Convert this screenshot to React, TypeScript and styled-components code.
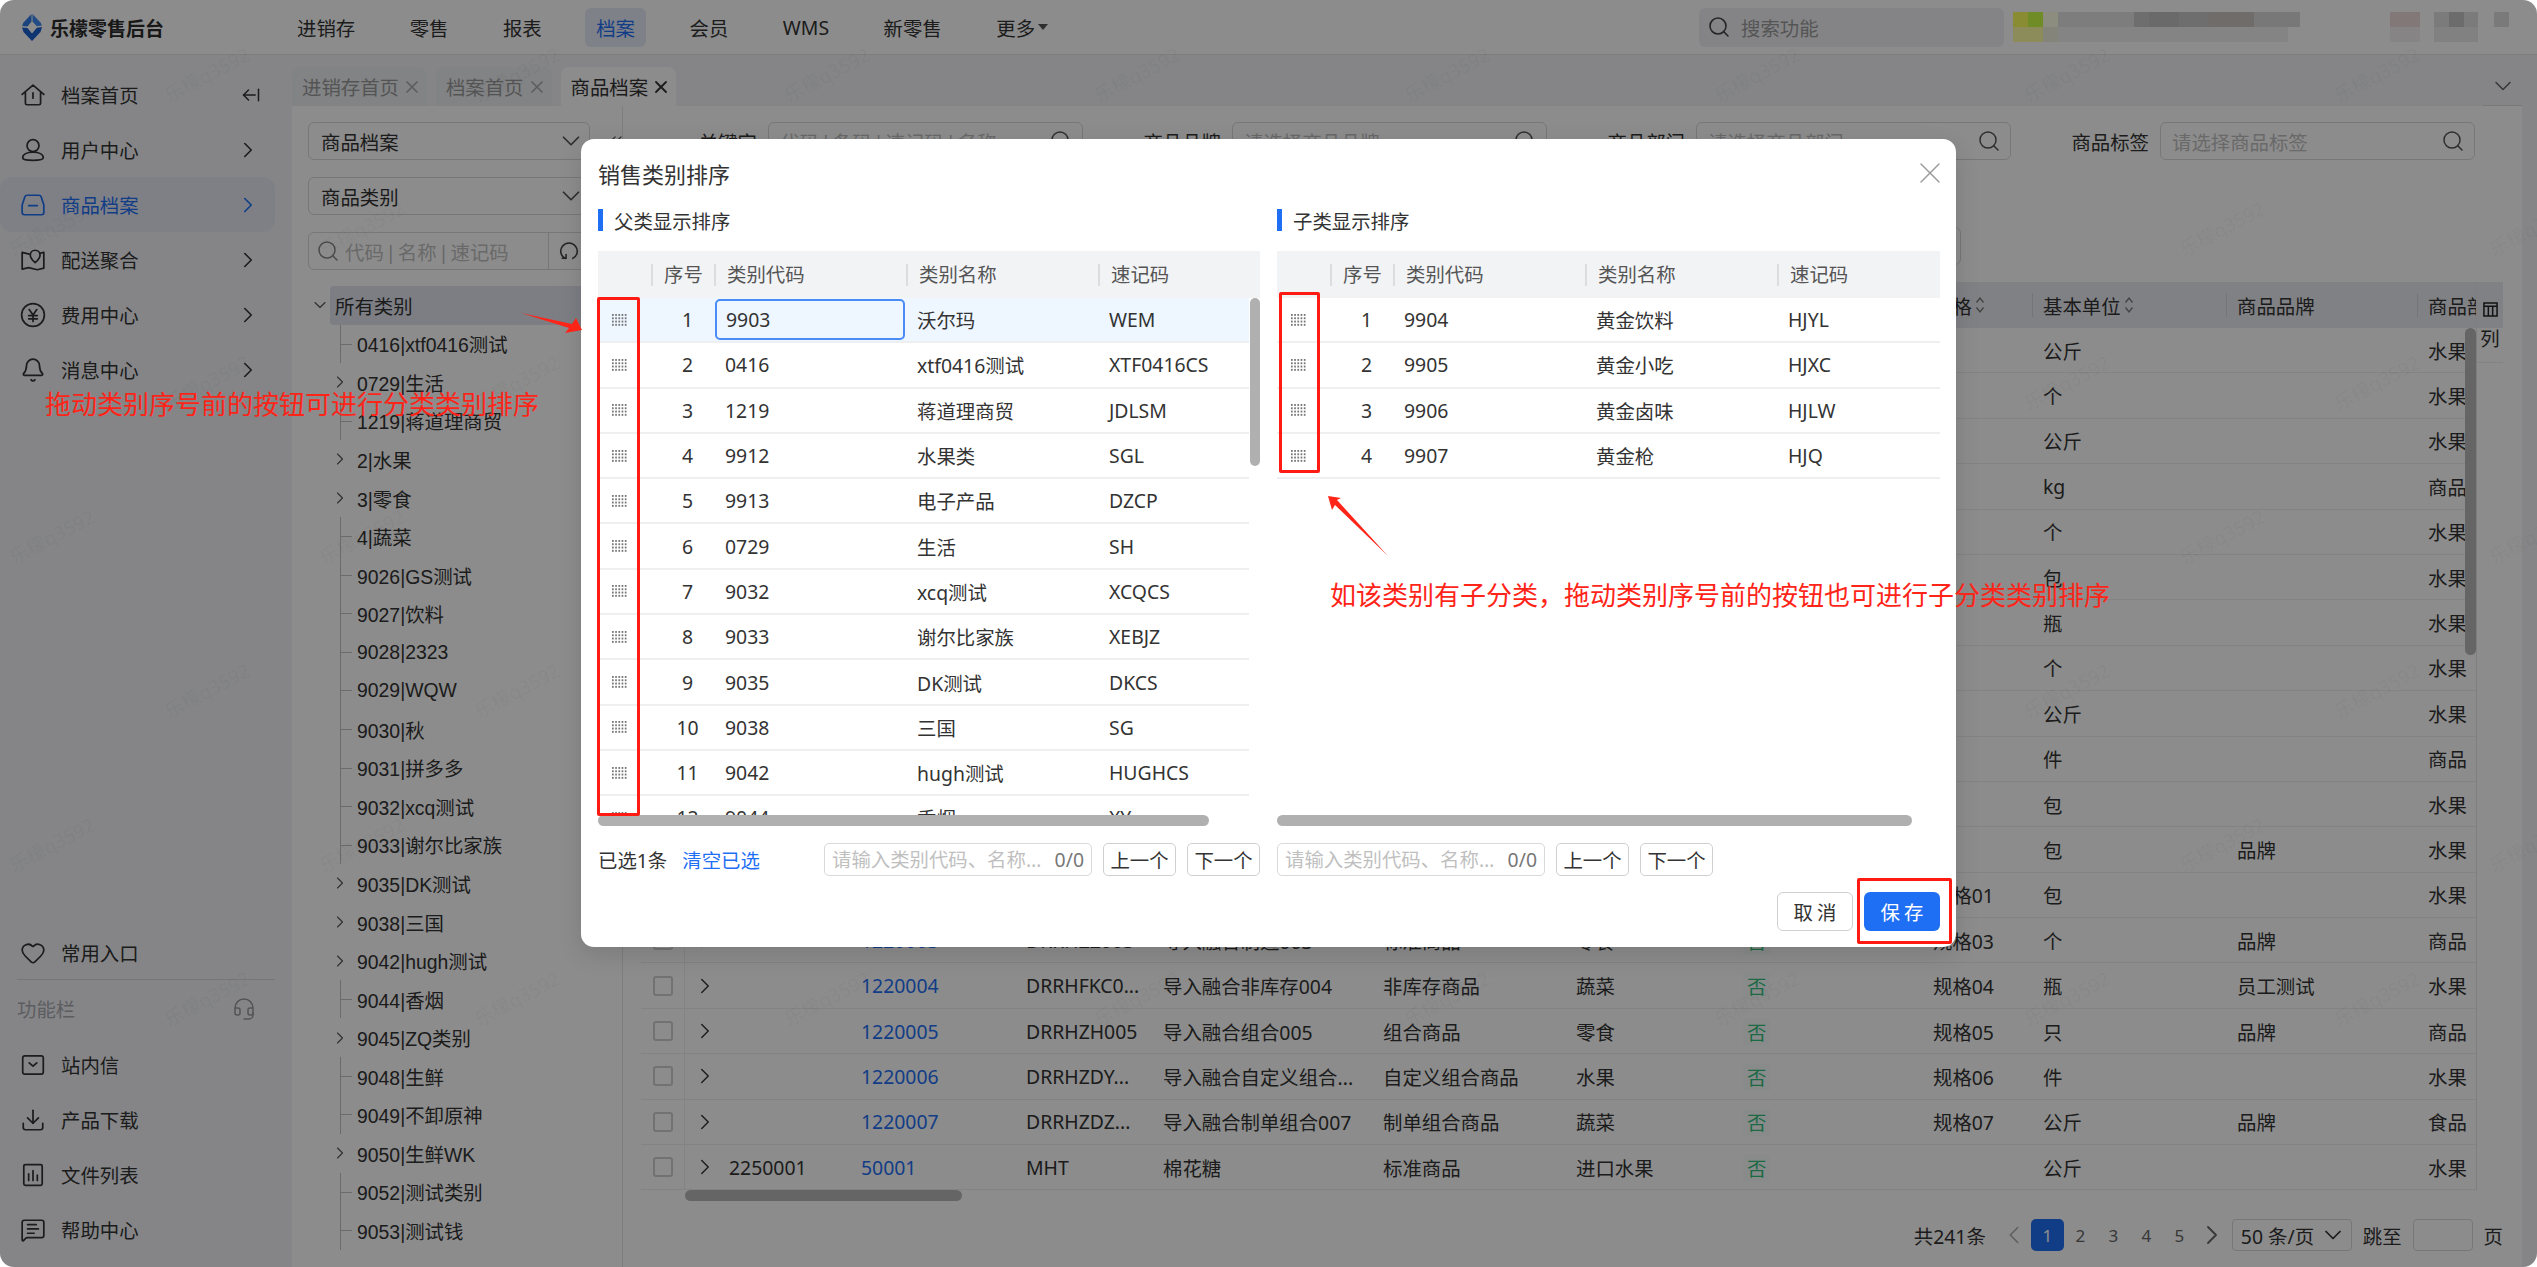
import * as React from 'react'
import styled, { createGlobalStyle } from 'styled-components'
import { ArrowLeftFromLine, Bell, ChevronDown, ChevronLeft, ChevronRight, ChevronsLeft, Download, Headset, Heart, MessageSquareText, Search, X } from 'lucide-react'

const primary = '#1f6ff5'
const text = '#333'
const muted = '#bfbfbf'

const GlobalStyle = createGlobalStyle`
  html, body { margin: 0; background: #fff; }
  body {
    font-family: "Noto Sans", "Noto Sans CJK SC", sans-serif;
    font-size: 19.4px;
    color: ${text};
  }
  * { box-sizing: border-box; }
`

/* ---------- data ---------- */

const topMenu = ['进销存', '零售', '报表', '档案', '会员', 'WMS', '新零售']

const parents = [
  ['1', '9903', '沃尔玛', 'WEM'],
  ['2', '0416', 'xtf0416测试', 'XTF0416CS'],
  ['3', '1219', '蒋道理商贸', 'JDLSM'],
  ['4', '9912', '水果类', 'SGL'],
  ['5', '9913', '电子产品', 'DZCP'],
  ['6', '0729', '生活', 'SH'],
  ['7', '9032', 'xcq测试', 'XCQCS'],
  ['8', '9033', '谢尔比家族', 'XEBJZ'],
  ['9', '9035', 'DK测试', 'DKCS'],
  ['10', '9038', '三国', 'SG'],
  ['11', '9042', 'hugh测试', 'HUGHCS'],
  ['12', '9044', '香烟', 'XY'],
]

const children = [
  ['1', '9904', '黄金饮料', 'HJYL'],
  ['2', '9905', '黄金小吃', 'HJXC'],
  ['3', '9906', '黄金卤味', 'HJLW'],
  ['4', '9907', '黄金枪', 'HJQ'],
]

const tree: [string, 'closed' | 'leaf'][] = [
  ['0416|xtf0416测试', 'leaf'],
  ['0729|生活', 'closed'],
  ['1219|蒋道理商贸', 'leaf'],
  ['2|水果', 'closed'],
  ['3|零食', 'closed'],
  ['4|蔬菜', 'leaf'],
  ['9026|GS测试', 'leaf'],
  ['9027|饮料', 'leaf'],
  ['9028|2323', 'leaf'],
  ['9029|WQW', 'leaf'],
  ['9030|秋', 'leaf'],
  ['9031|拼多多', 'leaf'],
  ['9032|xcq测试', 'leaf'],
  ['9033|谢尔比家族', 'leaf'],
  ['9035|DK测试', 'closed'],
  ['9038|三国', 'closed'],
  ['9042|hugh测试', 'closed'],
  ['9044|香烟', 'leaf'],
  ['9045|ZQ类别', 'closed'],
  ['9048|生鲜', 'leaf'],
  ['9049|不卸原神', 'leaf'],
  ['9050|生鲜WK', 'closed'],
  ['9052|测试类别', 'leaf'],
  ['9053|测试钱', 'leaf'],
]

// sku, code, name, type, category, spec, unit, brand, dept
const goods: string[][] = [
  ['', '', '', '', '', '', '公斤', '', '水果'],
  ['', '', '', '', '', '', '个', '', '水果'],
  ['', '', '', '', '', '', '公斤', '', '水果'],
  ['', '', '', '', '', '', 'kg', '', '商品'],
  ['', '', '', '', '', '', '个', '', '水果'],
  ['', '', '', '', '', '', '包', '', '水果'],
  ['', '', '', '', '', '', '瓶', '', '水果'],
  ['', '', '', '', '', '', '个', '', '水果'],
  ['', '', '', '', '', '', '公斤', '', '水果'],
  ['', '', '', '', '', '', '件', '', '商品'],
  ['', '', '', '', '', '', '包', '', '水果'],
  ['', '', '', '', '', '', '包', '品牌', '水果'],
  ['', '', '', '', '', '规格01', '包', '', '水果'],
  ['1220003', 'DRRHZZ003', '导入融合制造003', '标准商品', '零食', '规格03', '个', '品牌', '商品'],
  ['1220004', 'DRRHFKC0...', '导入融合非库存004', '非库存商品', '蔬菜', '规格04', '瓶', '员工测试', '水果'],
  ['1220005', 'DRRHZH005', '导入融合组合005', '组合商品', '零食', '规格05', '只', '品牌', '商品'],
  ['1220006', 'DRRHZDY...', '导入融合自定义组合...', '自定义组合商品', '水果', '规格06', '件', '', '水果'],
  ['1220007', 'DRRHZDZ...', '导入融合制单组合007', '制单组合商品', '蔬菜', '规格07', '公斤', '品牌', '食品'],
  ['50001', 'MHT', '棉花糖', '标准商品', '进口水果', '', '公斤', '', '水果'],
]

const watermarks = Array.from({ length: 7 }, (_, row) =>
  Array.from({ length: 9 }, (_, col) => ({
    x: (row % 2 ? 5 : 160) + col * 310,
    y: 60 + row * 154,
  })),
).flat()

const mosaic: [number, number, number, number, string][] = [
  [0, 0, 15, 15, '#fbff5e'],
  [15, 0, 15, 15, '#caff45'],
  [30, 0, 15, 15, '#ffffe8'],
  [45, 0, 76, 15, '#e3e3e3'],
  [121, 0, 15, 15, '#c9c9c9'],
  [136, 0, 30, 15, '#c1c1c1'],
  [166, 0, 30, 15, '#c8c8c8'],
  [196, 0, 45, 15, '#cbc5c2'],
  [241, 0, 46, 15, '#dadada'],
  [0, 15, 30, 15, '#fdffa3'],
  [30, 15, 15, 15, '#f0f0e0'],
  [45, 15, 230, 15, '#f0f0f0'],
  [377, 0, 30, 15, '#eedada'],
  [421, 0, 15, 15, '#e0e0e0'],
  [436, 0, 15, 15, '#c5c5c5'],
  [451, 0, 14, 15, '#e0e0e0'],
  [481, 0, 15, 15, '#dedede'],
  [377, 15, 30, 15, '#f4f0f0'],
  [421, 15, 44, 15, '#ececec'],
]

/* ---------- icons ---------- */

function HomeIcon() {
  return (
    <IconSvg viewBox="0 0 24 24">
      <path d="M2 11.5 12 2.8l10 8.7M5 9.5v10a1.5 1.5 0 0 0 1.5 1.5h11a1.5 1.5 0 0 0 1.5-1.5v-10M12 10v5" />
    </IconSvg>
  )
}

function UserIcon() {
  return (
    <IconSvg viewBox="0 0 24 24">
      <circle cx="12" cy="8" r="5.5" />
      <path d="M2.5 19.2c0-3.2 4-5.2 9.5-5.2s9.5 2 9.5 5.2c0 1.5-2.5 2.3-9.5 2.3s-9.5-.8-9.5-2.3z" />
    </IconSvg>
  )
}

function ArchiveIcon() {
  return (
    <IconSvg viewBox="0 0 24 24">
      <path d="M6.5 3h11c1 0 1.7.5 2 1.4L22 12v7a2 2 0 0 1-2 2H4a2 2 0 0 1-2-2v-7l2.500-7.600C4.800 3.500 5.500 3 6.500 3zM8 12.500h8" />
    </IconSvg>
  )
}

function MapIcon() {
  return (
    <IconSvg viewBox="0 0 24 24">
      <path d="M8.500 6.500 2 5v15.500l6-1.500 8 2 6-1.500V5l-3 .7" />
      <path d="M14 14.500c-3-2.800-4.500-4.800-4.500-7a4.500 4.500 0 0 1 9 0c0 2.200-1.500 4.200-4.500 7z" />
    </IconSvg>
  )
}

function YenIcon() {
  return (
    <IconSvg viewBox="0 0 24 24">
      <circle cx="12" cy="12" r="10.500" />
      <path d="m8.500 7 3.500 5 3.500-5M8 12.500h8M8 15.500h8M12 12v6" />
    </IconSvg>
  )
}

function InboxIcon() {
  return (
    <IconSvg viewBox="0 0 24 24">
      <rect x="2.500" y="3.500" width="19" height="17" rx="2" />
      <path d="m8.500 10 3.500 3 3.500-3" />
    </IconSvg>
  )
}

function FileBarsIcon() {
  return (
    <IconSvg viewBox="0 0 24 24">
      <rect x="3.500" y="2.500" width="17" height="19" rx="1.500" />
      <path d="M8 11v6M12 8v9M16 12v5" />
    </IconSvg>
  )
}

function RefreshIcon() {
  return (
    <RefreshSvg viewBox="0 0 24 24">
      <path d="M8.500 20.500a9 9 0 1 1 7 0" />
      <path d="M4 20h4.800v-4.800" />
    </RefreshSvg>
  )
}

function Logo() {
  return (
    <LogoSvg viewBox="0 0 20 27">
      <path d="M9.500 0v7.500L5.500 12.500 0 12 1.500 8.500z" fill="#2f7ce6" />
      <path d="M10.500 0 18.500 8.500 20 11.500 14.800 12.300 10.500 7.500z" fill="#3d8bf2" />
      <path d="M0 13.500 5.500 14 10 19.500 14.800 13.800 20 13 18.500 18 10 27 1.500 18z" fill="#1d5fd0" />
    </LogoSvg>
  )
}

function Grip() {
  return (
    <GripSvg viewBox="0 0 15 12">
      {[0, 1, 2, 3].flatMap(r =>
        [0, 1, 2, 3, 4].map(c => <rect key={`${r}-${c}`} x={c * 3.2} y={r * 3.3} width="1.700" height="1.900" />),
      )}
    </GripSvg>
  )
}

function SortIcon() {
  return (
    <SortSvg viewBox="0 0 10 18">
      <path d="M1.500 6.500 5 2l3.500 4.500M1.500 11.500 5 16l3.500-4.500" />
    </SortSvg>
  )
}

function ColumnsIcon() {
  return (
    <ColumnsSvg viewBox="0 0 16 16">
      <path d="M1 1h14v14H1zM1 4.500h14M5.700 4.500V15M10.300 4.500V15" />
    </ColumnsSvg>
  )
}

/* ---------- page ---------- */

function Piped(props: { hint: string }) {
  const parts = props.hint.split('|')
  return (
    <span>
      {parts.map((part, i) => (
        <React.Fragment key={part}>
          {i > 0 && <Pipe>|</Pipe>}
          {part}
        </React.Fragment>
      ))}
    </span>
  )
}

function SideItem(props: { icon: React.ReactNode; label: string; active?: boolean; arrow?: boolean; trail?: React.ReactNode }) {
  return (
    <SideRow $active={props.active}>
      {props.icon}
      <span>{props.label}</span>
      <SideTrail>{props.trail || (props.arrow && <ChevronRight size={26} strokeWidth={1.5} />)}</SideTrail>
    </SideRow>
  )
}

function Sorter(props: { rows: string[][]; columns: string; focused?: boolean; thumb?: boolean }) {
  return (
    <SortTable>
      <SortHead $columns={props.columns}>
        <span />
        <SortHeadCell>序号</SortHeadCell>
        <SortHeadCell>类别代码</SortHeadCell>
        <SortHeadCell>类别名称</SortHeadCell>
        <SortHeadCell>速记码</SortHeadCell>
      </SortHead>
      {props.rows.map((row, i) => (
        <SortRow key={row[1]} $columns={props.columns} $selected={props.focused && i === 0} $inset={props.thumb}>
          <GripCell>
            <Grip />
          </GripCell>
          <SeqCell>{row[0]}</SeqCell>
          {props.focused && i === 0 ? <FocusCell>{row[1]}</FocusCell> : <SortCell>{row[1]}</SortCell>}
          <SortCell>{row[2]}</SortCell>
          <SortCell>{row[3]}</SortCell>
        </SortRow>
      ))}
      {props.thumb && <VerticalThumb />}
    </SortTable>
  )
}

function FindBar() {
  return (
    <FindGroup>
      <FindBox>
        <FindInput readOnly placeholder="请输入类别代码、名称、速记码" />
        <FindCount>0/0</FindCount>
      </FindBox>
      <FindButton>上一个</FindButton>
      <FindButton>下一个</FindButton>
    </FindGroup>
  )
}

export default function App() {
  return (
    <>
      <GlobalStyle />
      <Page>
        <Header>
          <Brand>
            <Logo />
            <BrandName>乐檬零售后台</BrandName>
          </Brand>
          <TopNav>
            {topMenu.map(item => (
              <TopLink key={item} $active={item === '档案'}>
                {item}
              </TopLink>
            ))}
            <TopLink>
              更多
              <MoreCaret />
            </TopLink>
          </TopNav>
          <HeaderSearch>
            <Search size={24} strokeWidth={1.6} />
            <span>搜索功能</span>
          </HeaderSearch>
          <Mosaic viewBox="0 0 524 30">
            {mosaic.map(([x, y, w, h, fill]) => (
              <rect key={`${x}-${y}`} x={x} y={y} width={w} height={h} fill={fill} />
            ))}
          </Mosaic>
        </Header>

        <Body>
          <Sidebar>
            <SideGroup>
              <SideItem icon={<HomeIcon />} label="档案首页" trail={<ArrowLeftFromLine size={20} strokeWidth={1.8} />} />
              <SideItem icon={<UserIcon />} label="用户中心" arrow />
              <SideItem icon={<ArchiveIcon />} label="商品档案" arrow active />
              <SideItem icon={<MapIcon />} label="配送聚合" arrow />
              <SideItem icon={<YenIcon />} label="费用中心" arrow />
              <SideItem icon={<Bell size={26} strokeWidth={1.6} />} label="消息中心" arrow />
            </SideGroup>
            <SideGroup>
              <SideItem icon={<Heart size={26} strokeWidth={1.6} />} label="常用入口" />
              <SideDivider />
              <SideCaption>
                <span>功能栏</span>
                <Headset size={24} strokeWidth={1.5} />
              </SideCaption>
              <SideItem icon={<InboxIcon />} label="站内信" />
              <SideItem icon={<Download size={26} strokeWidth={1.6} />} label="产品下载" />
              <SideItem icon={<FileBarsIcon />} label="文件列表" />
              <SideItem icon={<MessageSquareText size={26} strokeWidth={1.6} />} label="帮助中心" />
            </SideGroup>
          </Sidebar>

          <Workspace>
            <TabBar>
              <Tab>
                进销存首页
                <X size={20} strokeWidth={2} />
              </Tab>
              <Tab>
                档案首页
                <X size={20} strokeWidth={2} />
              </Tab>
              <Tab $active>
                商品档案
                <X size={20} strokeWidth={2.2} />
              </Tab>
              <TabMenu>
                <ChevronDown size={28} strokeWidth={1.3} />
              </TabMenu>
            </TabBar>

            <WorkBody>
              <FilterPanel>
                <Select>
                  商品档案
                  <ChevronDown size={30} strokeWidth={1.4} />
                </Select>
                <Select>
                  商品类别
                  <ChevronDown size={30} strokeWidth={1.4} />
                </Select>
                <TreeSearch>
                  <TreeSearchText>
                    <Search size={24} strokeWidth={1.5} />
                    <Piped hint="代码|名称|速记码" />
                  </TreeSearchText>
                  <TreeRefresh>
                    <RefreshIcon />
                  </TreeRefresh>
                </TreeSearch>
                <Tree>
                  <TreeRoot>
                    <TreeToggle>
                      <ChevronDown size={28} strokeWidth={1.3} />
                    </TreeToggle>
                    <TreeRootLabel>所有类别</TreeRootLabel>
                  </TreeRoot>
                  {tree.map(([label, kind]) => (
                    <TreeRow key={label} $leaf={kind === 'leaf'}>
                      <TreeToggle>{kind === 'closed' && <ChevronRight size={28} strokeWidth={1.3} />}</TreeToggle>
                      <span>{label}</span>
                    </TreeRow>
                  ))}
                </Tree>
                <CollapseHandle>
                  <ChevronsLeft size={20} strokeWidth={1.5} />
                </CollapseHandle>
              </FilterPanel>

              <Main>
                <FilterRow>
                  {[
                    ['关键字', '代码|条码|速记码|名称'],
                    ['商品品牌', '请选择商品品牌'],
                    ['商品部门', '请选择商品部门'],
                    ['商品标签', '请选择商品标签'],
                  ].map(([label, hint]) => (
                    <FilterField key={label}>
                      <FilterLabel>{label}</FilterLabel>
                      <FilterInput>
                        <Piped hint={hint} />
                        <Search size={24} strokeWidth={1.5} />
                      </FilterInput>
                    </FilterField>
                  ))}
                </FilterRow>
                <ToolRow>
                  <ToolButton>查询</ToolButton>
                </ToolRow>

                <TableArea>
                  <GoodsTable>
                    <GoodsHead>
                      <CheckCell />
                      <span />
                      <HeadCell>序号</HeadCell>
                      <HeadCell>商品代码</HeadCell>
                      <HeadCell>速记码</HeadCell>
                      <HeadCell>商品名称</HeadCell>
                      <HeadCell>商品类型</HeadCell>
                      <HeadCell>商品类别</HeadCell>
                      <HeadCell>是否停用</HeadCell>
                      <HeadCell>
                        规格
                        <SortIcon />
                      </HeadCell>
                      <HeadCell>
                        基本单位
                        <SortIcon />
                      </HeadCell>
                      <HeadCell>商品品牌</HeadCell>
                      <HeadCell>商品部门</HeadCell>
                    </GoodsHead>
                    {goods.map((row, i) => (
                      <GoodsRow key={i}>
                        <CheckCell>
                          <Checkbox />
                        </CheckCell>
                        <ExpandCell>
                          <ChevronRight size={26} strokeWidth={1.3} />
                        </ExpandCell>
                        <GoodsCell>{row[4] === '进口水果' ? '2250001' : ''}</GoodsCell>
                        <GoodsLink>{row[0]}</GoodsLink>
                        <GoodsCell>{row[1]}</GoodsCell>
                        <GoodsCell>{row[2]}</GoodsCell>
                        <GoodsCell>{row[3]}</GoodsCell>
                        <GoodsCell>{row[4]}</GoodsCell>
                        <GoodsCell>{i > 12 && <StatusTag>否</StatusTag>}</GoodsCell>
                        <GoodsCell>{row[5]}</GoodsCell>
                        <GoodsCell>{row[6]}</GoodsCell>
                        <GoodsCell>{row[7]}</GoodsCell>
                        <GoodsCell>{row[8]}</GoodsCell>
                      </GoodsRow>
                    ))}
                    <TableThumb />
                  </GoodsTable>
                  <ColumnPicker>
                    <ColumnsIcon />
                    <span>列</span>
                  </ColumnPicker>
                </TableArea>
                <ScrollTrack>
                  <ScrollThumb />
                </ScrollTrack>

                <Pager>
                  <PagerTotal>共241条</PagerTotal>
                  <PageButton $dim>
                    <ChevronLeft size={30} strokeWidth={1.2} />
                  </PageButton>
                  <PageButton $active>1</PageButton>
                  <PageButton>2</PageButton>
                  <PageButton>3</PageButton>
                  <PageButton>4</PageButton>
                  <PageButton>5</PageButton>
                  <PageButton>
                    <ChevronRight size={32} strokeWidth={1.4} />
                  </PageButton>
                  <PageSize>
                    50 条/页
                    <ChevronDown size={28} strokeWidth={1.5} />
                  </PageSize>
                  <PagerText>跳至</PagerText>
                  <PageJump />
                  <PagerText>页</PagerText>
                </Pager>
              </Main>
            </WorkBody>
          </Workspace>
        </Body>

        <Watermarks>
          {watermarks.map(m => (
            <Watermark key={`${m.x}-${m.y}`} $x={m.x} $y={m.y}>
              乐檬q3592
            </Watermark>
          ))}
        </Watermarks>

        <Overlay>
          <Modal>
            <ModalTitle>
              销售类别排序
              <X size={36} strokeWidth={0.9} />
            </ModalTitle>
            <ModalColumns>
              <div>
                <SectionTitle>父类显示排序</SectionTitle>
                <Sorter rows={parents} columns="53px 63px 192px 192px 162px" focused thumb />
                <HScroll $width={611} />
              </div>
              <div>
                <SectionTitle>子类显示排序</SectionTitle>
                <Sorter rows={children} columns="53px 63px 192px 192px 163px" />
                <HScroll $width={635} />
              </div>
            </ModalColumns>
            <ModalFinders>
              <SelectionBar>
                <SelectionInfo>
                  已选1条
                  <ClearLink>清空已选</ClearLink>
                </SelectionInfo>
                <FindBar />
              </SelectionBar>
              <SelectionBar>
                <FindBar />
              </SelectionBar>
            </ModalFinders>
            <ModalActions>
              <ActionButton>取消</ActionButton>
              <ActionButton $primary>保存</ActionButton>
            </ModalActions>
          </Modal>
        </Overlay>

        <Callout $left={597} $top={297} $width={43} $height={519} />
        <Callout $left={1279} $top={292} $width={41} $height={181} />
        <Callout $left={1857} $top={878} $width={95} $height={66} />
        <Arrows viewBox="0 0 2537 1267">
          <polygon points="521,313 572,324 576,318 582,330 565,333 569,328" />
          <polygon points="1388,556 1337,500 1341,498 1328,496 1332,510 1335,505" />
        </Arrows>
        <Note $left={45} $top={385}>
          拖动类别序号前的按钮可进行分类类别排序
        </Note>
        <Note $left={1330} $top={576}>
          如该类别有子分类，拖动类别序号前的按钮也可进行子分类类别排序
        </Note>
      </Page>
    </>
  )
}

/* ---------- frame ---------- */

const Page = styled.div`
  position: relative;
  display: flex;
  flex-direction: column;
  width: 2537px;
  height: 1267px;
  overflow: hidden;
  border-radius: 14px;
  background: #fff;
`
const Header = styled.header`
  display: flex;
  align-items: center;
  flex: none;
  height: 55px;
  background: #fff;
  border-bottom: 1px solid #e3e3e3;
`
const Brand = styled.div`
  display: flex;
  align-items: center;
  gap: 8px;
  width: 286px;
  padding-left: 22px;
`
const LogoSvg = styled.svg`
  width: 20px;
  height: 27px;
`
const BrandName = styled.span`
  font-family: "Noto Sans CJK SC", sans-serif;
  font-size: 19px;
  font-weight: 700;
  color: #2c2c2c;
`
const TopNav = styled.nav`
  display: flex;
  align-items: center;
  flex: 1;
  gap: 32.5px;
`
const TopLink = styled.a<{ $active?: boolean }>`
  display: flex;
  align-items: center;
  gap: 3px;
  height: 39px;
  padding: 0 11px;
  border-radius: 6px;
  color: ${p => (p.$active ? primary : text)};
  background: ${p => (p.$active ? '#e5ebf8' : 'transparent')};
`
const MoreCaret = styled.i`
  width: 0;
  height: 0;
  border-left: 5px solid transparent;
  border-right: 5px solid transparent;
  border-top: 6px solid #555;
`
const HeaderSearch = styled.div`
  display: flex;
  align-items: center;
  gap: 10px;
  width: 305px;
  height: 39px;
  padding-left: 8px;
  border-radius: 6px;
  background: #f0f1f4;
  color: #9b9b9b;
  svg {
    color: #444;
  }
`
const Mosaic = styled.svg`
  flex: none;
  width: 524px;
  height: 30px;
  margin-left: 9px;
`
const Body = styled.div`
  display: flex;
  flex: 1;
  min-height: 0;
`
const Pipe = styled.span`
  display: inline-block;
  width: 14px;
  font-family: "Liberation Sans", sans-serif;
  text-align: center;
`

/* ---------- sidebar ---------- */

const Sidebar = styled.aside`
  display: flex;
  flex: none;
  flex-direction: column;
  justify-content: space-between;
  width: 292px;
  padding: 12px 0 10px;
  background: #f2f3f7;
`
const SideGroup = styled.div`
  display: flex;
  flex-direction: column;
`
const SideRow = styled.div<{ $active?: boolean }>`
  display: flex;
  align-items: center;
  gap: 15px;
  width: 275px;
  height: 55px;
  padding: 0 14px 0 20px;
  border-radius: 12px;
  color: ${p => (p.$active ? primary : text)};
  background: ${p => (p.$active ? '#e6eaf5' : 'transparent')};
`
const SideTrail = styled.span`
  display: flex;
  margin-left: auto;
`
const IconSvg = styled.svg`
  flex: none;
  width: 26px;
  height: 26px;
  fill: none;
  stroke: currentColor;
  stroke-width: 1.6;
  stroke-linecap: round;
  stroke-linejoin: round;
`
const SideDivider = styled.div`
  height: 1px;
  margin: -1px 17px 0;
  background: #d6d7dc;
`
const SideCaption = styled.div`
  display: flex;
  align-items: center;
  justify-content: space-between;
  width: 275px;
  height: 57px;
  padding: 0 19px 0 17px;
  color: #a9aab0;
  svg {
    color: #999;
  }
`

/* ---------- workspace ---------- */

const Workspace = styled.div`
  display: flex;
  flex: 1;
  flex-direction: column;
  min-width: 0;
  padding-top: 12px;
  background: #f2f3f7;
`
const TabBar = styled.div`
  display: flex;
  flex: none;
  gap: 9px;
  height: 39px;
  padding-right: 15px;
`
const Tab = styled.div<{ $active?: boolean }>`
  display: flex;
  align-items: center;
  gap: 3px;
  height: 39px;
  padding: 0 5px 0 10px;
  border-radius: 8px 8px 0 0;
  color: ${p => (p.$active ? text : '#9a9a9a')};
  background: ${p => (p.$active ? '#fff' : '#eceef2')};
  svg {
    color: ${p => (p.$active ? '#333' : '#aaa')};
  }
`
const TabMenu = styled.div`
  display: flex;
  align-items: center;
  justify-content: center;
  width: 39px;
  margin-left: auto;
  color: #666;
  border-bottom: 1px solid #dcdde2;
`
const WorkBody = styled.div`
  display: flex;
  flex: 1;
  min-height: 0;
  margin-right: 15px;
  background: #fff;
`
const FilterPanel = styled.section`
  position: relative;
  display: flex;
  flex: none;
  flex-direction: column;
  gap: 17px;
  width: 331px;
  padding: 16px 32px 0 16px;
  border-right: 1px solid #e6e6e6;
`
const Select = styled.div`
  display: flex;
  align-items: center;
  justify-content: space-between;
  height: 38px;
  padding: 0 3px 0 12px;
  border: 1px solid #d9d9d9;
  border-radius: 6px;
  svg {
    color: #555;
  }
`
const TreeSearch = styled.div`
  display: flex;
  height: 38px;
  border: 1px solid #d9d9d9;
  border-radius: 6px;
`
const TreeSearchText = styled.div`
  display: flex;
  align-items: center;
  flex: 1;
  gap: 5px;
  padding-left: 7px;
  color: ${muted};
  svg {
    color: #888;
  }
`
const TreeRefresh = styled.div`
  display: flex;
  align-items: center;
  justify-content: center;
  width: 41px;
  border-left: 1px solid #d9d9d9;
`
const RefreshSvg = styled.svg`
  width: 22px;
  height: 22px;
  fill: none;
  stroke: #444;
  stroke-width: 1.7;
`
const Tree = styled.div`
  display: flex;
  flex-direction: column;
  width: 300px;
  margin-top: -1px;
  font-family: "Liberation Sans", "Noto Sans CJK SC", sans-serif;
  white-space: nowrap;
`
const TreeRoot = styled.div`
  display: flex;
  align-items: center;
  height: 38.55px;
  padding-left: 2px;
`
const TreeRootLabel = styled.span`
  display: flex;
  align-items: center;
  flex: 1;
  height: 39px;
  padding-left: 5px;
  border-radius: 4px;
  background: #e3e6f1;
`
const TreeRow = styled.div<{ $leaf?: boolean }>`
  position: relative;
  display: flex;
  align-items: center;
  gap: 7px;
  height: 38.55px;
  padding-left: 22px;
  ${p =>
    p.$leaf &&
    `
    &::before { content: ''; position: absolute; left: 32px; top: 0; bottom: 0; width: 1px; background: #c4c4c4; }
    &::after { content: ''; position: absolute; left: 32px; top: 19px; width: 12px; height: 1px; background: #c4c4c4; }
  `}
`
const TreeToggle = styled.span`
  display: flex;
  flex: none;
  justify-content: center;
  width: 20px;
  color: #555;
`
const CollapseHandle = styled.div`
  position: absolute;
  top: 24px;
  right: -4px;
  color: #555;
`

/* ---------- main table ---------- */

const Main = styled.main`
  display: flex;
  flex: 1;
  flex-direction: column;
  min-width: 0;
  padding: 16px 19px 0 18px;
`
const FilterRow = styled.div`
  display: flex;
  gap: 60px;
  padding-left: 38px;
`
const FilterField = styled.div`
  display: flex;
  align-items: center;
  justify-content: flex-end;
  gap: 11px;
  width: 404px;
`
const FilterLabel = styled.label`
  white-space: nowrap;
`
const FilterInput = styled.div`
  display: flex;
  align-items: center;
  justify-content: space-between;
  flex: none;
  width: 315px;
  height: 38px;
  padding: 0 9px 0 11px;
  border: 1px solid #d9d9d9;
  border-radius: 6px;
  color: ${muted};
  svg {
    color: #555;
  }
`
const ToolRow = styled.div`
  display: flex;
  height: 38px;
  margin-top: 67px;
`
const ToolButton = styled.button`
  width: 260px;
  margin-left: 1060px;
  border: 1px solid #d9d9d9;
  border-radius: 6px;
  background: #fff;
  font: inherit;
`
const TableArea = styled.div`
  display: flex;
  flex: none;
  margin-top: 17px;
`
const GoodsTable = styled.div`
  position: relative;
  flex: none;
  width: 1836px;
  overflow: hidden;
  border-right: 1px solid #e6e6e6;
`
const goodsColumns = '44px 33px 132px 165px 137px 220px 193px 171px 186px 110px 194px 191px 60px'
const GoodsHead = styled.div`
  display: grid;
  grid-template-columns: ${goodsColumns};
  align-items: center;
  height: 46px;
  background: #eaebf2;
  white-space: nowrap;
`
const HeadCell = styled.div`
  display: flex;
  align-items: center;
  gap: 3px;
  height: 24px;
  padding-left: 10px;
  border-left: 1px solid #d5d6dc;
`
const SortSvg = styled.svg`
  width: 10px;
  height: 18px;
  fill: none;
  stroke: #777;
  stroke-width: 1.3;
`
const GoodsRow = styled.div`
  display: grid;
  grid-template-columns: ${goodsColumns};
  align-items: center;
  height: 45.4px;
  border-bottom: 1px solid #eeeeee;
  white-space: nowrap;
`
const CheckCell = styled.div`
  display: flex;
  align-items: center;
  height: 100%;
  padding-left: 12px;
  border-right: 1px solid #eeeeee;
`
const Checkbox = styled.i`
  width: 20px;
  height: 20px;
  border: 2px solid #cfcfcf;
  border-radius: 3px;
  background: #fff;
`
const ExpandCell = styled.div`
  display: flex;
  justify-content: center;
  padding-left: 7px;
  color: #333;
`
const GoodsCell = styled.div`
  padding-left: 11px;
  overflow: hidden;
`
const GoodsLink = styled(GoodsCell)`
  color: ${primary};
`
const StatusTag = styled.span`
  margin-left: -4px;
  padding: 0 4px;
  border-radius: 2px;
  color: #34c07f;
  background: rgba(52, 192, 127, 0.04);
`
const TableThumb = styled.div`
  position: absolute;
  top: 46px;
  right: 0;
  width: 11px;
  height: 327px;
  border-radius: 6px;
  background: #b9b9b9;
`
const ColumnPicker = styled.div`
  display: flex;
  flex: 1;
  flex-direction: column;
  align-items: center;
  gap: 6px;
  height: 81px;
  padding-top: 20px;
  background: linear-gradient(#eaebf2 46px, #fff 46px);
  border-bottom: 1px solid #eeeeee;
`
const ColumnsSvg = styled.svg`
  width: 15px;
  height: 15px;
  fill: none;
  stroke: #222;
  stroke-width: 1.6;
`
const ScrollTrack = styled.div`
  flex: none;
  height: 11px;
  padding-left: 44px;
`
const ScrollThumb = styled.div`
  width: 277px;
  height: 100%;
  border-radius: 6px;
  background: #b9b9b9;
`
const Pager = styled.div`
  display: flex;
  align-items: center;
  justify-content: flex-end;
  height: 32px;
  margin-top: 18px;
`
const PagerTotal = styled.span`
  margin-right: 12px;
`
const PageButton = styled.span<{ $active?: boolean; $dim?: boolean }>`
  display: flex;
  align-items: center;
  justify-content: center;
  width: 33px;
  height: 32px;
  border-radius: 5px;
  font-size: 17px;
  color: ${p => (p.$active ? '#fff' : p.$dim ? '#aaa' : '#666')};
  background: ${p => (p.$active ? primary : 'transparent')};
`
const PageSize = styled.div`
  display: flex;
  align-items: center;
  justify-content: space-between;
  width: 120px;
  height: 32px;
  margin-left: 3px;
  padding: 0 4px 0 8px;
  border: 1px solid #d9d9d9;
  border-radius: 4px;
  white-space: nowrap;
`
const PagerText = styled.span`
  margin-left: 11px;
`
const PageJump = styled.div`
  width: 60px;
  height: 32px;
  margin-left: 11px;
  border: 1px solid #d9d9d9;
  border-radius: 4px;
`

/* ---------- overlay and modal ---------- */

const Watermarks = styled.div`
  position: absolute;
  inset: 0;
  pointer-events: none;
`
const Watermark = styled.span<{ $x: number; $y: number }>`
  position: absolute;
  left: ${p => p.$x}px;
  top: ${p => p.$y}px;
  font-size: 19px;
  color: rgba(0, 0, 0, 0.05);
  transform: rotate(-28deg);
  white-space: nowrap;
`
const Overlay = styled.div`
  position: absolute;
  inset: 0;
  display: flex;
  justify-content: center;
  padding-top: 139px;
  background: rgba(0, 0, 0, 0.45);
`
const Modal = styled.div`
  display: flex;
  flex-direction: column;
  width: 1375px;
  height: 808px;
  padding: 0 16px 0 17px;
  border-radius: 13px;
  background: #fff;
  box-shadow: 0 8px 24px rgba(0, 0, 0, 0.12);
`
const ModalTitle = styled.div`
  display: flex;
  align-items: center;
  justify-content: space-between;
  flex: none;
  height: 68px;
  font-size: 22px;
  svg {
    margin-right: -8px;
    color: #999;
  }
`
const ModalColumns = styled.div`
  display: grid;
  grid-template-columns: 662px 663px;
  gap: 17px;
`
const SectionTitle = styled.div`
  display: flex;
  align-items: center;
  height: 22px;
  margin: 2px 0 20px;
  padding-left: 11px;
  border-left: 5px solid ${primary};
`
const SortTable = styled.div`
  position: relative;
  height: 564px;
  overflow: hidden;
`
const SortHead = styled.div<{ $columns: string }>`
  display: grid;
  grid-template-columns: ${p => p.$columns};
  align-items: center;
  height: 47px;
  background: #f2f3f5;
`
const SortHeadCell = styled.div`
  height: 22px;
  padding-left: 11px;
  line-height: 22px;
  color: #555;
  border-left: 2px solid #dcdde0;
`
const SortRow = styled.div<{ $columns: string; $selected?: boolean; $inset?: boolean }>`
  display: grid;
  grid-template-columns: ${p => p.$columns};
  align-items: center;
  height: 45.3px;
  margin-right: ${p => (p.$inset ? '11px' : 0)};
  border-bottom: 2px solid #eeeff1;
  background: ${p => (p.$selected ? '#eef6ff' : 'transparent')};
  white-space: nowrap;
`
const GripCell = styled.div`
  display: flex;
  justify-content: center;
  padding-right: 11px;
`
const GripSvg = styled.svg`
  width: 15px;
  height: 12px;
  fill: #777;
`
const SeqCell = styled.div`
  text-align: center;
  padding-left: 10px;
`
const SortCell = styled.div`
  padding-left: 11px;
`
const FocusCell = styled.div`
  display: flex;
  align-items: center;
  height: 41px;
  margin: 0 1px;
  padding-left: 9px;
  border: 2px solid #4a8bf5;
  border-radius: 5px;
`
const VerticalThumb = styled.div`
  position: absolute;
  top: 47px;
  right: 0;
  width: 10px;
  height: 168px;
  border-radius: 5px;
  background: #b0b0b0;
`
const HScroll = styled.div<{ $width: number }>`
  width: ${p => p.$width}px;
  height: 11px;
  border-radius: 6px;
  background: #b0b0b0;
`
const ModalFinders = styled.div`
  display: grid;
  grid-template-columns: 662px 663px;
  gap: 17px;
  margin-top: 17px;
`
const SelectionBar = styled.div`
  display: flex;
  align-items: center;
  justify-content: space-between;
  height: 33px;
`
const SelectionInfo = styled.div`
  display: flex;
  gap: 15px;
`
const ClearLink = styled.a`
  color: ${primary};
`
const FindGroup = styled.div`
  display: flex;
  gap: 11px;
`
const FindBox = styled.div`
  display: flex;
  align-items: center;
  width: 268px;
  height: 33px;
  padding: 0 7px;
  border: 1px solid #d9d9d9;
  border-radius: 5px;
`
const FindInput = styled.input`
  flex: 1;
  min-width: 0;
  border: 0;
  outline: 0;
  padding: 0;
  font: inherit;
  text-overflow: ellipsis;
  &::placeholder {
    color: ${muted};
    text-overflow: ellipsis;
  }
`
const FindCount = styled.span`
  margin-left: 8px;
  color: #777;
`
const FindButton = styled.button`
  width: 73px;
  height: 33px;
  padding: 0;
  border: 1px solid #d0d0d0;
  border-radius: 5px;
  background: #fff;
  font: inherit;
  color: ${text};
`
const ModalActions = styled.div`
  display: flex;
  justify-content: flex-end;
  gap: 11px;
  margin-top: 16px;
`
const ActionButton = styled.button<{ $primary?: boolean }>`
  width: 76px;
  height: 39px;
  padding: 0;
  border: ${p => (p.$primary ? 0 : '1px solid #d0d0d0')};
  border-radius: 6px;
  background: ${p => (p.$primary ? primary : '#fff')};
  color: ${p => (p.$primary ? '#fff' : text)};
  font: inherit;
  letter-spacing: 4px;
  text-indent: 4px;
`

/* ---------- red annotations drawn on top of the screenshot ---------- */

const Callout = styled.div<{ $left: number; $top: number; $width: number; $height: number }>`
  position: absolute;
  left: ${p => p.$left}px;
  top: ${p => p.$top}px;
  width: ${p => p.$width}px;
  height: ${p => p.$height}px;
  border: 3px solid #ff1a12;
  border-radius: 2px;
`
const Arrows = styled.svg`
  position: absolute;
  inset: 0;
  width: 2537px;
  height: 1267px;
  fill: #ff2418;
  pointer-events: none;
`
const Note = styled.div<{ $left: number; $top: number }>`
  position: absolute;
  left: ${p => p.$left}px;
  top: ${p => p.$top}px;
  font-family: "Noto Sans CJK SC", sans-serif;
  font-size: 26px;
  line-height: 36px;
  color: #ff2418;
  white-space: nowrap;
`
